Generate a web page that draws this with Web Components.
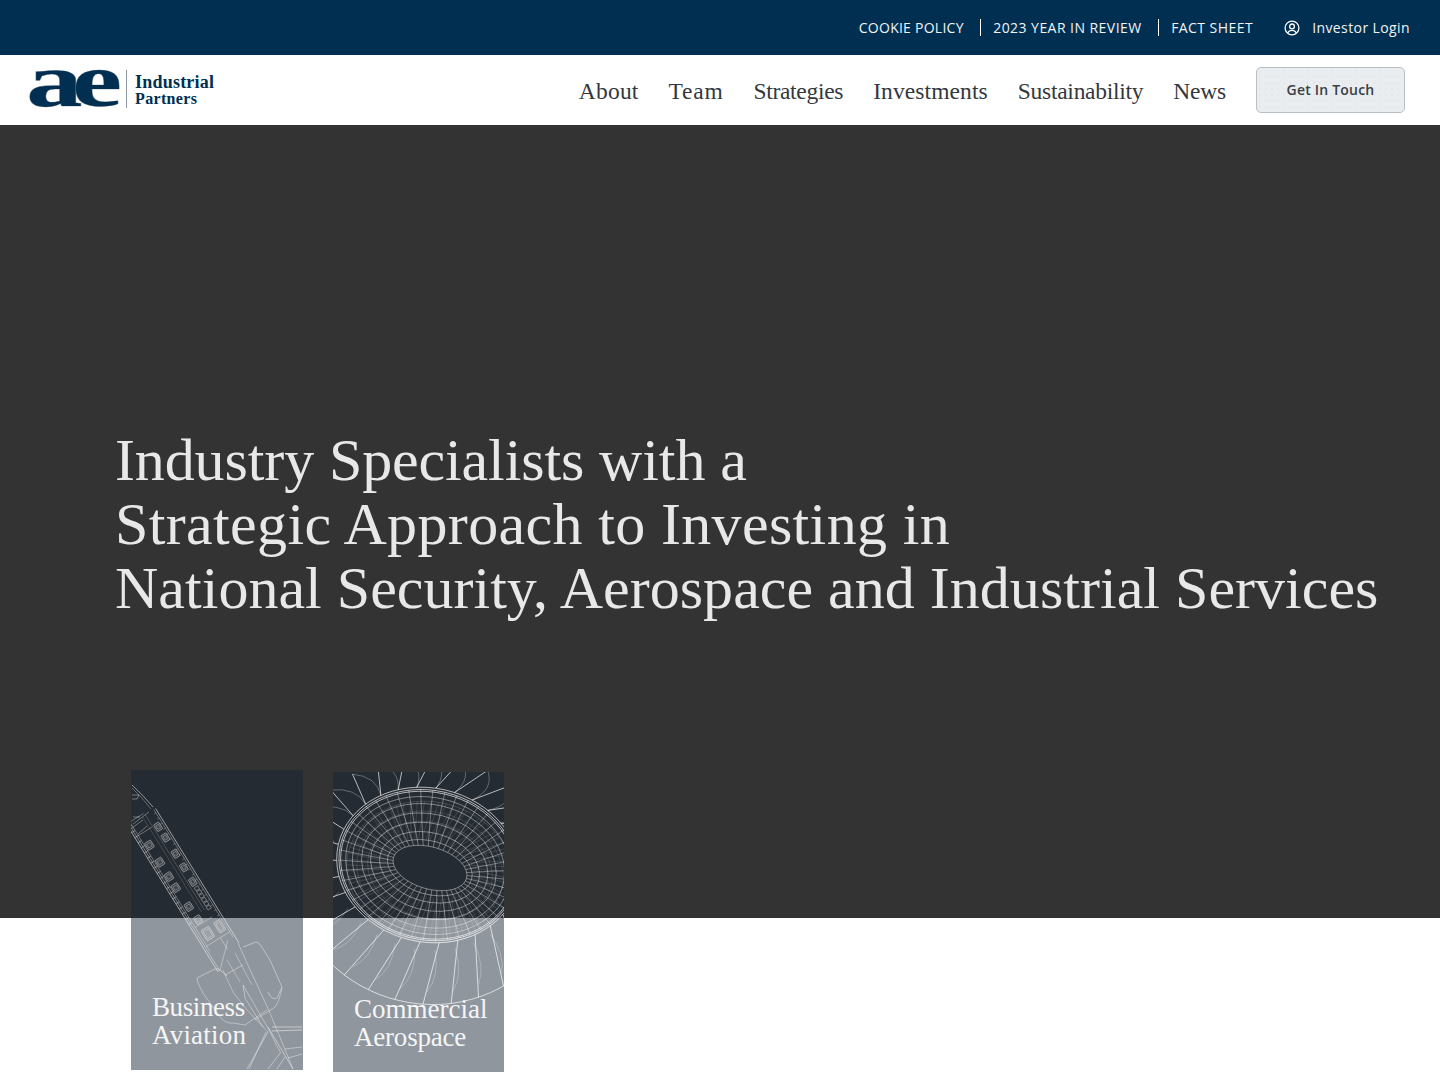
<!DOCTYPE html>
<html><head><meta charset="utf-8"><style>
html,body{margin:0;padding:0;background:#fff}
body{height:1080px;overflow:hidden;font-family:"Open Sans",sans-serif}
</style></head><body>
<site-topbar></site-topbar>
<site-nav></site-nav>
<hero-band></hero-band>
<sector-row>
  <sector-card art="plane" style="width:172px"><span style="letter-spacing:-.4px">Business</span><br><span style="letter-spacing:.2px">Aviation</span></sector-card>
  <sector-card art="turbine" style="width:171px;margin-top:2px">Commercial<br><span style="letter-spacing:-.2px">Aerospace</span></sector-card>
</sector-row>
<script>
class SiteTopbar extends HTMLElement{constructor(){super();this.attachShadow({mode:'open'}).innerHTML=`<style>
:host{display:flex;height:55px;background:#002f52;justify-content:flex-end;align-items:center;padding-right:30px;font:14px/20px "Open Sans",sans-serif;letter-spacing:.45px}
a{white-space:nowrap;color:#f2f4f6}
.sep{width:1.5px;height:17px;background:#fff;margin:0 12px 0 16px}
.login{display:flex;align-items:center;gap:12px;margin-left:31px;letter-spacing:.4px}
svg{width:16px;height:16px;display:block}
</style><a style="letter-spacing:.25px">COOKIE POLICY</a><i class="sep"></i><a>2023 YEAR IN REVIEW</a><i class="sep"></i><a>FACT SHEET</a>
<a class="login"><svg viewBox="0 0 16 16" fill="none" stroke="#fff" stroke-width="1.3"><circle cx="8" cy="8" r="6.9"/><circle cx="8" cy="6.4" r="2.4"/><path d="M3.600 13c1-2 2.600-2.700 4.400-2.700s3.400.7 4.400 2.700"/></svg>Investor Login</a>`}}
customElements.define('site-topbar',SiteTopbar);

class SiteNav extends HTMLElement{constructor(){super();this.attachShadow({mode:'open'}).innerHTML=`<style>
:host{display:flex;height:70px;background:#fff;align-items:center;padding:0 35px 0 30px;box-sizing:border-box}
.logo{display:block;margin-right:auto;width:190px;height:42px;overflow:visible}
.ae{font:700 76px "Liberation Serif",serif;fill:#002f52;stroke:#8b96a0;stroke-width:.7px;paint-order:stroke fill;letter-spacing:-7px}
.w{font:700 18px "Liberation Serif",serif;fill:#002f52}
nav{display:flex;gap:30px;font:23.500px/30px "Liberation Serif",serif;color:#33383d;margin:1px 30px 0 0}
.btn{width:149px;height:46px;box-sizing:border-box;border:1px solid #b9c0c5;border-radius:5px;background:#eaedef radial-gradient(circle,#dfe3e6 .6px,transparent .8px) 0 0/6px 6px;display:flex;align-items:center;justify-content:center;font:600 14px/20px "Open Sans",sans-serif;color:#3a4046;letter-spacing:.2px}
</style><svg class="logo" viewBox="0 0 190 42">
<text class="ae" transform="translate(-3.800 37) scale(1.48 1)">ae</text>
<rect x="96" y="1" width="1" height="38" fill="#8e979f"/>
<text class="w" x="105" y="18.500" textLength="79">Industrial</text>
<text class="w" x="105" y="34.500" textLength="62" style="font-size:16px">Partners</text>
</svg>
<nav><a style="letter-spacing:.2px">About</a><a style="letter-spacing:.75px">Team</a><a style="letter-spacing:-.3px">Strategies</a><a style="letter-spacing:.1px">Investments</a><a style="letter-spacing:-.27px">Sustainability</a><a style="letter-spacing:-.2px">News</a></nav><a class="btn">Get In Touch</a>`}}
customElements.define('site-nav',SiteNav);

class HeroBand extends HTMLElement{constructor(){super();this.attachShadow({mode:'open'}).innerHTML=`<style>
:host{display:block;height:793px;background:#333;box-sizing:border-box;padding:303px 0 0 115px;color:#e8e8e8}
h1{margin:0;font:400 60px/64px "Liberation Serif",serif;white-space:nowrap}
h1 span{display:block}
</style><h1><span style="letter-spacing:-.12px">Industry Specialists with a</span><span style="letter-spacing:.35px">Strategic Approach to Investing in</span><span style="letter-spacing:.02px">National Security, Aerospace and Industrial Services</span></h1>`}}
customElements.define('hero-band',HeroBand);

class SectorRow extends HTMLElement{constructor(){super();this.attachShadow({mode:'open'}).innerHTML=`<style>
:host{display:flex;gap:30px;margin-top:-148px;padding-left:131px;align-items:flex-start}
</style><slot></slot>`}}
customElements.define('sector-row',SectorRow);

function ell(cx,cy,rx,ry,deg,a){const t=deg*Math.PI/180,x=rx*Math.cos(a),y=ry*Math.sin(a);return [cx+x*Math.cos(t)-y*Math.sin(t),cy+x*Math.sin(t)+y*Math.cos(t)];}
function lerpE(A,B,t){return A.map((v,i)=>v+(B[i]-v)*t);}
function turbineArt(){
  const hole=[97,96,38,21,16], rim=[95,93,92,77,13], tip=[95,108,136,124,12];
  const L=(p,o,w)=>`<path d="${p}" stroke="#fff" stroke-opacity="${o}" stroke-width="${w||.7}" fill="none"/>`;
  const E=(e,o,w)=>`<ellipse cx="${e[0]}" cy="${e[1]}" rx="${e[2]}" ry="${e[3]}" transform="rotate(${e[4]} ${e[0]} ${e[1]})" stroke="#fff" stroke-opacity="${o}" stroke-width="${w||.7}" fill="none"/>`;
  const P=(e,a)=>ell(e[0],e[1],e[2],e[3],e[4],a).map(v=>v.toFixed(1)).join(' ');
  let s='';
  const back=[97,100,84,70,13];
  for(let i=0;i<72;i++){const a=i/72*6.283;s+=L(`M${P(lerpE(hole,back,.15),a)}L${P(back,a+.18)}`,.2,.6);}
  s+=E(lerpE(hole,back,.55),.2,.6)+E(lerpE(hole,back,.78),.18,.6)+E(back,.22,.6);
  const n=30;
  for(let i=0;i<n;i++){
    const a=i/n*6.283,a2=(i+1)/n*6.283,r=P(rim,a),t=P(tip,a+.16),r2=P(rim,a2);
    const upper=Math.sin(a)<0;
    s+=L(`M${r}L${t}`,.8,.85);
    s+=upper?L(`M${t}Q${P(lerpE(rim,tip,.6),a+.3)} ${r2}`,.42,.7):L(`M${P(lerpE(rim,tip,.12),a+.05)}Q${P(lerpE(rim,tip,.55),a+.02)} ${P(lerpE(rim,tip,.8),a+.13)}`,.32,.8);
  }
  let arc='';for(let i=0;i<=40;i++){const a=.05+i/40*(Math.PI-.05);arc+=(i?'L':'M')+P(tip,a);}
  s+=L(arc,.8,.85);
  [0,.1,.24,.4,.56,.72,.84].forEach(t=>s+=E(lerpE(hole,rim,t),.58,.65));
  [.93,.96,1].forEach(t=>s+=E(lerpE(hole,rim,t),.7,.85));
  const m=46;
  for(let i=0;i<m;i++){const a=i/m*6.283;let d='';for(let k=0;k<=6;k++){const t=k/6*.96;d+=(k?'L':'M')+P(lerpE(hole,rim,t),a+t*.07);}s+=L(d,.55,.65);}
  return `<svg viewBox="0 0 171 300" width="171" height="300">${s}</svg>`;
}
function planeArt(){
  const L=(p,o,w)=>`<path d="${p}" stroke="#fff" stroke-opacity="${o||.6}" stroke-width="${w||.65}" fill="none"/>`;
  let c='';
  c+=L('M0 -3L158 -3',.75)+L('M0 -1L150 -1',.45)+L('M-6 30L172 30',.75)+L('M-6 28L172 28',.55)+L('M-6 26L150 26',.45);
  c+=L('M0 12.500L112 12.500',.2)+L('M0 9L112 9',.25);
  for(let x=-4;x<120;x+=6){c+=L(`M${x} 26V30`,.55);}
  for(let x=4;x<128;x+=6){c+=L(`M${x} -1V1.500`,.35);}
  const box=(x,y,w,h)=>`<rect x="${x}" y="${y}" width="${w}" height="${h}" rx="1" fill="#fff" fill-opacity=".12" stroke="#fff" stroke-opacity=".55" stroke-width=".7"/>`+L(`M${x+2} ${y+1.500}h${w-4}v${h-3}h${-(w-4)}z`,.4);
  [[13,1.500],[26,1],[45,1],[61,1],[78,1]].forEach(([x,y])=>c+=box(x,y,8,6));
  [[24,18],[44,18],[61,18],[74,18],[97,17],[113,16]].forEach(([x,y])=>c+=box(x,y,8,7));
  for(let x=88;x<112;x+=4.500){c+=L(`M${x} 2h3.500v4h-3.500z`,.5);}
  c+=L('M-2 10V26M14 10V26M122 6V26',.45);
  c+=box(128,1,12,7)+box(128,14,12,9);
  c+=L('M144 -1V27M144 10H158M150 5L172 28',.5);
  let s=`<g transform="translate(22 40) rotate(58.200)">${c}</g>`;
  s+=L('M1 15Q12 25 22 37',.75)+L('M1 18Q10 26 20 39',.45)+L('M1 25H8L6 29H1',.6);
  s+=L('M18 42L2 54M2 47L9 47M1 58L12 50M7 64L16 56',.55);
  s+=L('M66 208L84 199Q88 198 90 201L96 206',.65)+L('M66 208Q66 212 72 223L89 247Q95 254 102 253L114 255L136 240',.6);
  s+=L('M112 177L125 172Q128 172 130 176L139 190L151 217L146 228Q141 231 137 222',.65)+L('M151 218Q148 232 144 237L124 250',.6)+L('M94 205L112 195',.6);
  s+=L('M92 200L102 222L116 240L137 262',.55)+L('M107 173L116 193L139 243L162 299',.6)+L('M104 183L121 215',.5)+L('M96 190L109 212',.5);
  s+=L('M112 215L116 222L137 258L149 282',.6)+L('M112 215L114 228L132 257',.6);
  s+=L('M137 257L162 299',.7);
  s+=L('M137 262L116 299M135 262L118 299',.65)+L('M150 282L137 299M154 287L146 299',.65);
  s+=L('M141 257L171 257M141 261L171 260',.75)+L('M154 279L171 277M157 288L171 284',.6);
  return `<svg viewBox="0 0 172 300" width="172" height="300">${s}</svg>`;
}
class SectorCard extends HTMLElement{constructor(){super();this.attachShadow({mode:'open'}).innerHTML=`<style>
:host{display:grid;height:300px;background:rgba(22,36,51,.48);overflow:hidden;color:#f4f5f6}
#art,.label{grid-area:1/1}
#art svg{display:block}
.label{align-self:end;padding:0 0 21px 21px;font:27px/28px "Liberation Serif",serif;white-space:nowrap}
</style><div id="art"></div><div class="label"><slot></slot></div>`}
connectedCallback(){this.shadowRoot.getElementById('art').innerHTML=this.getAttribute('art')==='plane'?planeArt():turbineArt();}}
customElements.define('sector-card',SectorCard);
</script></body></html>
